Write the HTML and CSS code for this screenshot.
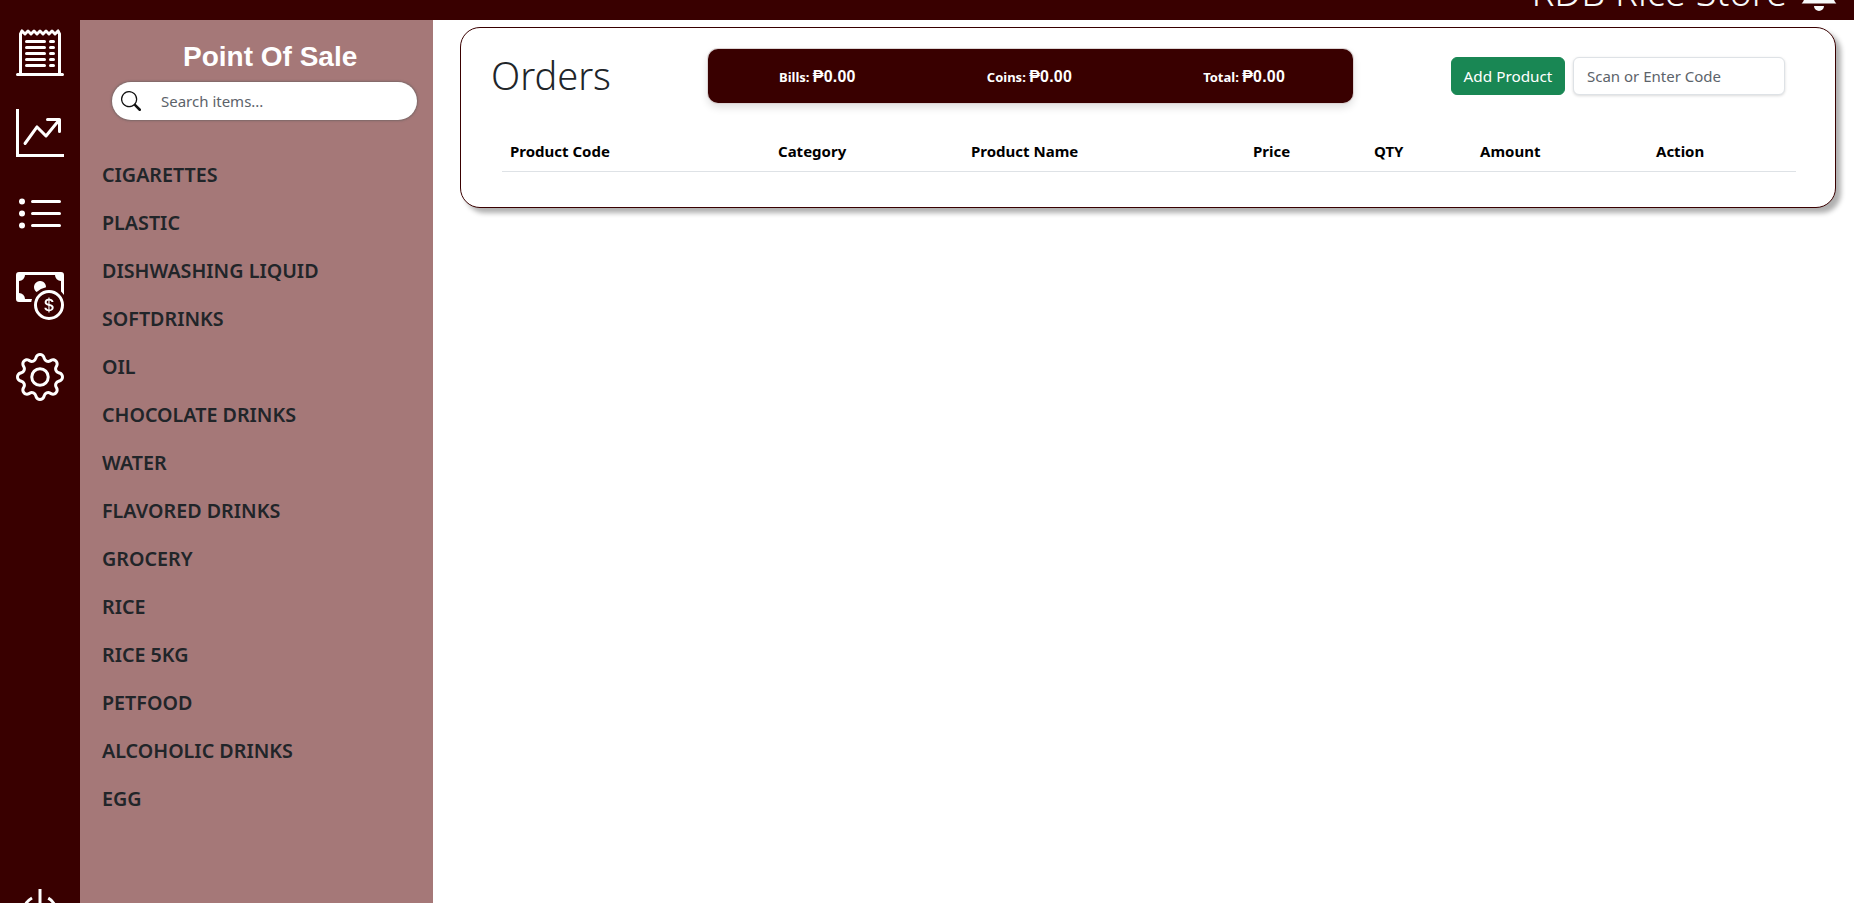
FILE: index.html
```html
<!DOCTYPE html>
<html lang="en">
<head>
  <meta charset="UTF-8">
  <meta name="viewport" content="width=device-width, initial-scale=1.0">
  <title>Point Of Sale</title>
  <link rel="stylesheet" href="styles.css">
</head>
<body>
  <header class="topbar">
    <span class="store-name">RDB Rice Store</span>
    <svg class="bell" viewBox="0 0 16 16" fill="currentColor"><path d="M8 16a2 2 0 0 0 2-2H6a2 2 0 0 0 2 2zm.995-14.901a1 1 0 1 0-1.99 0A5.002 5.002 0 0 0 3 6c0 1.098-.5 6-2 7h14c-1.5-1-2-5.902-2-7 0-2.42-1.72-4.44-4.005-4.901z"/></svg>
  </header>

  <div class="layout">
    <!-- Icon rail -->
    <nav class="rail">
      <a href="#" class="rail-link"><svg viewBox="0 0 16 16" fill="currentColor"><path d="M3 4.5a.5.5 0 0 1 .5-.5h6a.5.5 0 1 1 0 1h-6a.5.5 0 0 1-.5-.5zm0 2a.5.5 0 0 1 .5-.5h6a.5.5 0 1 1 0 1h-6a.5.5 0 0 1-.5-.5zm0 2a.5.5 0 0 1 .5-.5h6a.5.5 0 1 1 0 1h-6a.5.5 0 0 1-.5-.5zm0 2a.5.5 0 0 1 .5-.5h6a.5.5 0 0 1 0 1h-6a.5.5 0 0 1-.5-.5zm0 2a.5.5 0 0 1 .5-.5h6a.5.5 0 0 1 0 1h-6a.5.5 0 0 1-.5-.5zM11.5 4a.5.5 0 0 0 0 1h1a.5.5 0 0 0 0-1h-1zm0 2a.5.5 0 0 0 0 1h1a.5.5 0 0 0 0-1h-1zm0 2a.5.5 0 0 0 0 1h1a.5.5 0 0 0 0-1h-1zm0 2a.5.5 0 0 0 0 1h1a.5.5 0 0 0 0-1h-1zm0 2a.5.5 0 0 0 0 1h1a.5.5 0 0 0 0-1h-1z"/><path d="M2.354.646a.5.5 0 0 0-.801.13l-.5 1A.5.5 0 0 0 1 2v13H.5a.5.5 0 0 0 0 1h15a.5.5 0 0 0 0-1H15V2a.5.5 0 0 0-.053-.224l-.5-1a.5.5 0 0 0-.8-.13L13 1.293l-.646-.647a.5.5 0 0 0-.708 0L11 1.293l-.646-.647a.5.5 0 0 0-.708 0L9 1.293 8.354.646a.5.5 0 0 0-.708 0L7 1.293 6.354.646a.5.5 0 0 0-.708 0L5 1.293 4.354.646a.5.5 0 0 0-.708 0L3 1.293 2.354.646zm-.217 1.198.51.51a.5.5 0 0 0 .707 0L4 1.707l.646.647a.5.5 0 0 0 .708 0L6 1.707l.646.647a.5.5 0 0 0 .708 0L8 1.707l.646.647a.5.5 0 0 0 .708 0L10 1.707l.646.647a.5.5 0 0 0 .708 0L12 1.707l.646.647a.5.5 0 0 0 .708 0l.509-.51.137.274V15H2V2.118l.137-.274z"/></svg></a>
      <a href="#" class="rail-link"><svg viewBox="0 0 16 16" fill="currentColor"><path fill-rule="evenodd" d="M0 0h1v15h15v1H0V0Zm10 3.5a.5.5 0 0 1 .5-.5h4a.5.5 0 0 1 .5.5v4a.5.5 0 0 1-1 0V4.9l-3.613 4.417a.5.5 0 0 1-.74.037L7.06 6.767l-3.656 5.027a.5.5 0 0 1-.808-.588l4-5.5a.5.5 0 0 1 .758-.06l2.609 2.61L13.445 4H10.5a.5.5 0 0 1-.5-.5Z"/></svg></a>
      <a href="#" class="rail-link"><svg viewBox="0 0 16 16" fill="currentColor"><path fill-rule="evenodd" d="M5 11.5a.5.5 0 0 1 .5-.5h9a.5.5 0 0 1 0 1h-9a.5.5 0 0 1-.5-.5zm0-4a.5.5 0 0 1 .5-.5h9a.5.5 0 0 1 0 1h-9a.5.5 0 0 1-.5-.5zm0-4a.5.5 0 0 1 .5-.5h9a.5.5 0 0 1 0 1h-9a.5.5 0 0 1-.5-.5zm-3 1a1 1 0 1 0 0-2 1 1 0 0 0 0 2zm0 4a1 1 0 1 0 0-2 1 1 0 0 0 0 2zm0 4a1 1 0 1 0 0-2 1 1 0 0 0 0 2z"/></svg></a>
      <a href="#" class="rail-link"><svg viewBox="0 0 16 16" fill="currentColor"><path fill-rule="evenodd" d="M11 15a4 4 0 1 0 0-8 4 4 0 0 0 0 8zm5-4a5 5 0 1 1-10 0 5 5 0 0 1 10 0z"/><path d="M9.438 11.944c.047.596.518 1.06 1.363 1.116v.44h.375v-.443c.875-.061 1.386-.529 1.386-1.207 0-.618-.39-.936-1.09-1.1l-.296-.07v-1.2c.376.043.614.248.671.532h.658c-.047-.575-.54-1.024-1.329-1.073V8.5h-.375v.45c-.747.073-1.255.522-1.255 1.158 0 .562.378.92 1.007 1.066l.248.061v1.272c-.384-.058-.639-.27-.696-.563h-.668zm1.36-1.354c-.369-.085-.569-.26-.569-.522 0-.294.216-.514.572-.578v1.1h-.003zm.432.746c.449.104.655.272.655.569 0 .339-.257.571-.709.614v-1.195l.054.012z"/><path d="M1 0a1 1 0 0 0-1 1v8a1 1 0 0 0 1 1h4.083c.058-.344.145-.678.258-1H3a2 2 0 0 0-2-2V3a2 2 0 0 0 2-2h10a2 2 0 0 0 2 2v3.528c.38.34.717.728 1 1.154V1a1 1 0 0 0-1-1H1z"/><path d="M9.998 5.083 10 5a2 2 0 1 0-3.132 1.65 5.982 5.982 0 0 1 3.13-1.567z"/></svg></a>
      <a href="#" class="rail-link"><svg viewBox="0 0 16 16" fill="currentColor"><path d="M8 4.754a3.246 3.246 0 1 0 0 6.492 3.246 3.246 0 0 0 0-6.492zM5.754 8a2.246 2.246 0 1 1 4.492 0 2.246 2.246 0 0 1-4.492 0z"/><path d="M9.796 1.343c-.527-1.79-3.065-1.79-3.592 0l-.094.319a.873.873 0 0 1-1.255.52l-.292-.16c-1.64-.892-3.433.902-2.54 2.541l.159.292a.873.873 0 0 1-.52 1.255l-.319.094c-1.79.527-1.79 3.065 0 3.592l.319.094a.873.873 0 0 1 .52 1.255l-.16.292c-.892 1.64.901 3.434 2.541 2.54l.292-.159a.873.873 0 0 1 1.255.52l.094.319c.527 1.79 3.065 1.79 3.592 0l.094-.319a.873.873 0 0 1 1.255-.52l.292.16c1.64.893 3.434-.902 2.54-2.541l-.159-.292a.873.873 0 0 1 .52-1.255l.319-.094c1.79-.527 1.79-3.065 0-3.592l-.319-.094a.873.873 0 0 1-.52-1.255l.16-.292c.893-1.64-.902-3.433-2.541-2.54l-.292.159a.873.873 0 0 1-1.255-.52l-.094-.319zm-2.633.283c.246-.835 1.428-.835 1.674 0l.094.319a1.873 1.873 0 0 0 2.693 1.115l.291-.16c.764-.415 1.6.42 1.184 1.185l-.159.292a1.873 1.873 0 0 0 1.116 2.692l.318.094c.835.246.835 1.428 0 1.674l-.319.094a1.873 1.873 0 0 0-1.115 2.693l.16.291c.415.764-.42 1.6-1.185 1.184l-.291-.159a1.873 1.873 0 0 0-2.693 1.116l-.094.318c-.246.835-1.428.835-1.674 0l-.094-.319a1.873 1.873 0 0 0-2.692-1.115l-.292.16c-.764.415-1.6-.42-1.184-1.185l.159-.291A1.873 1.873 0 0 0 1.945 8.93l-.319-.094c-.835-.246-.835-1.428 0-1.674l.319-.094A1.873 1.873 0 0 0 3.06 4.377l-.16-.292c-.415-.764.42-1.6 1.185-1.184l.292.159a1.873 1.873 0 0 0 2.692-1.115l.094-.319z"/></svg></a>
      <a href="#" class="rail-link rail-power"><svg viewBox="0 0 16 16" fill="currentColor"><path d="M7.5 1v7h1V1h-1z"/><path d="M3 8.812a4.999 4.999 0 0 1 2.578-4.375l-.485-.874A6 6 0 1 0 11 3.616l-.501.865A5 5 0 1 1 3 8.812z"/></svg></a>
    </nav>

    <!-- Categories -->
    <aside class="panel">
      <h1 class="panel-title">Point Of Sale</h1>
      <div class="search-box">
        <svg class="search-icon" viewBox="0 0 16 16" fill="currentColor"><path d="M11.742 10.344a6.5 6.5 0 1 0-1.397 1.398h-.001c.03.04.062.078.098.115l3.85 3.85a1 1 0 0 0 1.415-1.414l-3.85-3.85a1.007 1.007 0 0 0-.115-.1zM12 6.5a5.5 5.5 0 1 1-11 0 5.5 5.5 0 0 1 11 0z"/></svg>
        <input type="text" class="search-input" placeholder="Search items...">
      </div>
      <ul class="category-list">
        <li>CIGARETTES</li>
        <li>PLASTIC</li>
        <li>DISHWASHING LIQUID</li>
        <li>SOFTDRINKS</li>
        <li>OIL</li>
        <li>CHOCOLATE DRINKS</li>
        <li>WATER</li>
        <li>FLAVORED DRINKS</li>
        <li>GROCERY</li>
        <li>RICE</li>
        <li>RICE 5KG</li>
        <li>PETFOOD</li>
        <li>ALCOHOLIC DRINKS</li>
        <li>EGG</li>
      </ul>
    </aside>

    <!-- Orders -->
    <main class="content">
      <section class="orders-card">
        <div class="orders-head">
          <h2 class="orders-title">Orders</h2>
          <div class="totals">
            <span class="total-item">Bills: <b>₱0.00</b></span>
            <span class="total-item">Coins: <b>₱0.00</b></span>
            <span class="total-item">Total: <b>₱0.00</b></span>
          </div>
          <button class="add-button">Add Product</button>
          <input type="text" class="code-input" placeholder="Scan or Enter Code">
        </div>
        <table class="orders-table">
          <thead>
            <tr>
              <th class="col-code">Product Code</th>
              <th class="col-category">Category</th>
              <th class="col-name">Product Name</th>
              <th class="col-price">Price</th>
              <th class="col-qty">QTY</th>
              <th class="col-amount">Amount</th>
              <th>Action</th>
            </tr>
          </thead>
        </table>
      </section>
    </main>
  </div>
</body>
</html>
```

FILE: styles.css
```css
* {
  box-sizing: border-box;
}

body {
  margin: 0;
  height: 100vh;
  overflow: hidden;
  background: #fff;
  color: #212529;
  font-family: "Noto Sans", "Open Sans", sans-serif;
}

.topbar {
  height: 20px;
  background: #390000;
  color: #f8f9fa;
  display: flex;
  justify-content: flex-end;
  align-items: flex-end;
  padding-right: 15px;
  overflow: hidden;
}

.store-name {
  font-size: 38px;
  font-weight: 300;
  line-height: 50px;
  margin-bottom: 4px;
  margin-right: 12px;
  white-space: nowrap;
}

.bell {
  width: 40px;
  height: 40px;
  flex: none;
  margin-bottom: 9px;
}

.layout {
  display: flex;
  height: calc(100vh + 11px);
}

.rail {
  width: 80px;
  flex: none;
  background: #390000;
  display: flex;
  flex-direction: column;
  align-items: center;
  gap: 33.25px;
  padding-top: 8px;
}

.rail-link {
  display: block;
  width: 48px;
  height: 48px;
  color: #fff;
}

.rail-link svg {
  display: block;
  width: 48px;
  height: 48px;
}

.rail-power {
  margin-top: auto;
}

.panel {
  width: 353px;
  flex: none;
  background: #a57878;
}

.panel-title {
  margin: 0;
  padding-top: 22px;
  padding-left: 103px;
  color: #fff;
  font-family: "Liberation Sans", Arial, sans-serif;
  font-size: 28px;
  line-height: 30px;
  font-weight: 700;
}

.search-box {
  display: flex;
  align-items: center;
  width: 305px;
  height: 38px;
  margin: 10px 0 0 32px;
  padding-left: 9px;
  background: #fff;
  border-radius: 19px;
  box-shadow: 0 0 2px 1px rgba(90, 90, 90, 0.55);
}

.search-icon {
  width: 20px;
  height: 20px;
  flex: none;
  color: #111;
}

.search-input {
  flex: 1;
  min-width: 0;
  margin-left: 18px;
  border: none;
  outline: none;
  background: transparent;
  font-family: inherit;
  font-size: 15px;
}

.search-input::placeholder {
  color: #5c636a;
  opacity: 1;
}

.category-list {
  list-style: none;
  margin: 31px 0 0;
  padding: 0 0 0 22px;
}

.category-list li {
  height: 48px;
  line-height: 48px;
  font-size: 19.7px;
  font-weight: 600;
  color: #212529;
}

.content {
  flex: 1;
  min-width: 0;
  padding: 7px 18px 0 27px;
}

.orders-card {
  height: 181px;
  background: #fff;
  border: 1px solid #390000;
  border-radius: 20px;
  box-shadow: 5px 5px 5px #b0b0b0;
  padding: 21px 40px 0 31px;
}

.orders-head {
  display: flex;
  align-items: center;
  height: 54px;
}

.orders-title {
  margin: -2px 0 0 -1px;
  width: 217px;
  font-size: 38px;
  font-weight: 300;
  color: #212529;
}

.totals {
  width: 645px;
  height: 54px;
  flex: none;
  display: flex;
  align-items: center;
  justify-content: space-between;
  padding: 2px 68px 0 71px;
  background: #390000;
  border-radius: 10px;
  box-shadow: 0 0 0 1px #dcd4d4, 0 4px 8px rgba(0, 0, 0, 0.14);
  color: #fff;
}

.total-item {
  font-size: 13px;
  font-weight: 700;
}

.total-item b {
  font-family: "Liberation Sans", Arial, sans-serif;
  font-size: 16px;
  letter-spacing: 0.2px;
}

.add-button {
  width: 114px;
  height: 38px;
  margin-left: 98px;
  border: 1px solid #198754;
  border-radius: 6px;
  background: #198754;
  color: #fff;
  font-family: inherit;
  font-size: 15.3px;
}

.code-input {
  width: 212px;
  height: 38px;
  margin-left: 8px;
  padding: 6px 13px;
  border: 1px solid #dee2e6;
  border-radius: 6px;
  box-shadow: 0 1px 3px rgba(0, 0, 0, 0.15);
  outline: none;
  font-family: inherit;
  font-size: 15px;
}

.code-input::placeholder {
  color: #5c636a;
  opacity: 1;
}

.orders-table {
  width: 1294px;
  margin: 28px 0 0 10px;
  border-collapse: collapse;
  table-layout: fixed;
}

.orders-table th {
  padding: 8px;
  height: 40px;
  border-bottom: 1px solid #dee2e6;
  color: #000;
  font-size: 15px;
  font-weight: 700;
  text-align: left;
}

.col-code { width: 268px; }
.col-category { width: 193px; }
.col-name { width: 282px; }
.col-price { width: 121px; }
.col-qty { width: 106px; }
.col-amount { width: 176px; }
```
